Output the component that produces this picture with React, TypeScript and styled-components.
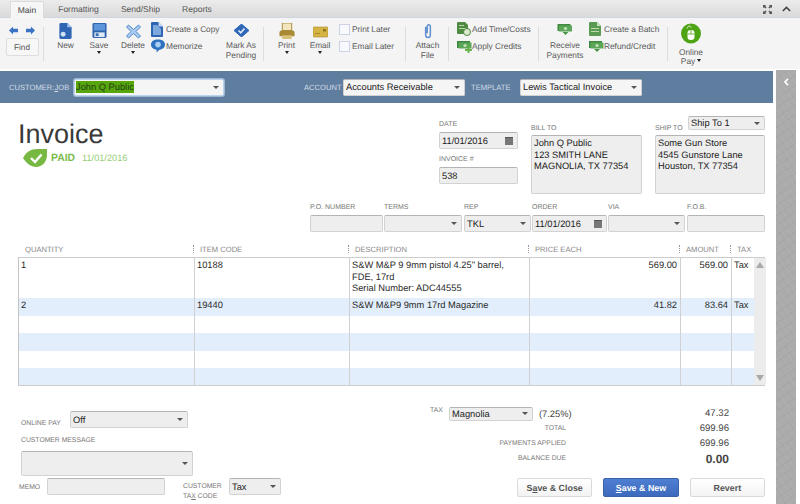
import React from 'react';
import styled, { createGlobalStyle, css } from 'styled-components';

const GlobalStyle = createGlobalStyle`
  html, body { margin: 0; padding: 0; background: #fff; }
  body {
    font-family: 'Liberation Sans', Arial, sans-serif;
    text-rendering: geometricPrecision;
  }
  * { box-sizing: border-box; }
`;

const Page = styled.div`
  width: 800px;
  height: 504px;
  overflow: hidden;
  background: #fff;
  display: flex;
  flex-direction: column;
  color: #2b2b2b;
  font-size: 9.3px;
`;

// TABS
const TabBar = styled.div`
  height: 18px;
  flex: none;
  display: flex;
  align-items: stretch;
  padding: 1px 9px 0 10px;
  background: linear-gradient(#ececec, #dadada);
  border-bottom: 1px solid #cfd6df;
`;
const Tab = styled.div<{ $w: number; $active?: boolean }>`
  display: flex;
  align-items: center;
  justify-content: center;
  width: ${(p) => p.$w}px;
  color: #555;
  font-size: 8.5px;
  ${(p) =>
    p.$active &&
    css`
      background: #f6f6f6;
      color: #444;
      border: 1px solid #dcdcdc;
      border-bottom: none;
      margin-bottom: -1px;
    `}
`;
const TabCorner = styled.div`
  margin-left: auto;
  display: flex;
  align-items: center;
  gap: 10px;
`;

// RIBBON
const Ribbon = styled.div`
  height: 51px;
  flex: none;
  display: flex;
  background: #f4f4f4;
  padding-top: 9px;
`;
const RibbonGroup = styled.div<{ $w: number; $last?: boolean }>`
  width: ${(p) => p.$w}px;
  height: 34px;
  flex: none;
  display: flex;
  border-right: ${(p) => (p.$last ? 'none' : '1px solid #dcdcdc')};
`;
const NavStack = styled.div`
  width: 100%;
  display: flex;
  flex-direction: column;
  align-items: center;
  padding-left: 1px;
  margin-top: -3px;
`;
const NavArrows = styled.div`
  display: flex;
  gap: 8px;
  height: 13px;
  align-items: center;
`;
const FindButton = styled.div`
  margin-top: 1px;
  width: 33px;
  height: 18px;
  flex: none;
  background: #f7f7f7;
  border: 1px solid #dedede;
  border-radius: 2px;
  display: flex;
  align-items: center;
  justify-content: center;
  font-size: 8.2px;
  color: #555;
`;
const Tool = styled.div<{ $w: number }>`
  width: ${(p) => p.$w}px;
  flex: none;
  display: flex;
  flex-direction: column;
  align-items: center;
  margin-top: -4px;
  font-size: 8.3px;
  line-height: 10px;
  color: #5a5a5a;
  text-align: center;
  white-space: nowrap;
`;
const ToolIcon = styled.div`
  height: 16px;
  display: flex;
  align-items: flex-start;
  justify-content: center;
  margin-bottom: 1px;
`;
const Caret = styled.span`
  width: 0;
  height: 0;
  margin-top: 1px;
  border-left: 2.5px solid transparent;
  border-right: 2.5px solid transparent;
  border-top: 3px solid #222;
`;
const MiniStack = styled.div<{ $w: number; $ml?: number }>`
  width: ${(p) => p.$w}px;
  margin-left: ${(p) => p.$ml ?? 0}px;
  flex: none;
  display: flex;
  flex-direction: column;
  gap: 3px;
  margin-top: -5px;
`;
const MiniTool = styled.div`
  height: 14px;
  display: flex;
  align-items: center;
  color: #5a5a5a;
  font-size: 8.3px;
  white-space: nowrap;
`;
const MiniIcon = styled.span`
  width: 15px;
  flex: none;
  display: flex;
  align-items: center;
`;
const PlainCheck = styled.span`
  width: 11px;
  height: 11px;
  margin-right: 2px;
  background: #f8f9fd;
  border: 1px solid #cdd3e6;
  flex: none;
`;
const OnlineTool = styled(Tool)`
  line-height: 8.5px;
`;
const OnlineIcon = styled(ToolIcon)`
  height: 21px;
  margin-bottom: 4px;
`;
const InlineCaret = styled(Caret)`
  display: inline-block;
  margin: 0 0 1px 2px;
  vertical-align: middle;
`;

// WORKSPACE
const Workspace = styled.div`
  flex: 1;
  min-height: 0;
  display: flex;
  padding-top: 1px;
`;
const FormColumn = styled.div`
  width: 773px;
  flex: none;
  display: flex;
  flex-direction: column;
`;
const Sidebar = styled.div`
  width: 20px;
  margin-left: 3px;
  flex: none;
  display: flex;
  justify-content: center;
  padding-top: 8px;
  background-color: #ababab;
  background-image: repeating-linear-gradient(
      55deg,
      transparent 0 5px,
      rgba(255, 255, 255, 0.05) 5px 6px
    ),
    repeating-linear-gradient(-35deg, transparent 0 7px, rgba(0, 0, 0, 0.035) 7px 8px);
`;

// CUSTOMER BAR
const CustomerBar = styled.div`
  height: 32px;
  flex: none;
  margin-top: 1px;
  display: flex;
  align-items: center;
  padding-left: 9px;
  background: #5f7d9f;
`;
const BarLabel = styled.span<{ $w: number; $ml?: number }>`
  width: ${(p) => p.$w}px;
  margin-left: ${(p) => p.$ml ?? 0}px;
  flex: none;
  font-size: 7.6px;
  color: #d3dde8;
  white-space: nowrap;
`;

// FIELDS
const Field = styled.div<{ $w: number; $h?: number; $light?: boolean; $glow?: boolean }>`
  width: ${(p) => p.$w}px;
  height: ${(p) => p.$h ?? 17}px;
  flex: none;
  display: flex;
  align-items: center;
  justify-content: space-between;
  padding: 0 2px;
  font-size: 9.3px;
  color: #222;
  background: ${(p) => (p.$light ? '#f5f5f5' : '#eeeeee')};
  border: 1px solid #d2d2d2;
  border-top-color: #b4b4b4;
  border-radius: 2px;
  ${(p) =>
    p.$glow &&
    css`
      border: 1px solid #bcd3ee;
      box-shadow: 0 0 0 1px rgba(200, 220, 245, 0.6);
    `}
`;
const Arrow = styled.span`
  width: 0;
  height: 0;
  margin-right: 2px;
  border-left: 3px solid transparent;
  border-right: 3px solid transparent;
  border-top: 3px solid #555;
  flex: none;
`;
const Highlight = styled.span`
  display: inline-block;
  margin-left: -1px;
  padding: 1px 0;
  background: #58a60e;
  color: #1f3d10;
`;
const CalendarIcon = styled.span`
  width: 8px;
  height: 8px;
  margin-right: 2px;
  background: #777;
  border-top: 1px solid #555;
  flex: none;
`;

// HEADER
const InvoiceHead = styled.div`
  height: 100px;
  flex: none;
  display: flex;
  padding-left: 18px;
`;
const TitleBlock = styled.div`
  width: 421px;
  flex: none;
  padding-top: 15px;
`;
const Title = styled.h1`
  margin: 0;
  font-size: 27px;
  line-height: 32px;
  font-weight: 400;
  color: #3a3a3a;
`;
const PaidRow = styled.div`
  display: flex;
  align-items: center;
  margin: -1px 0 0 5px;
  height: 18px;
`;
const PaidWord = styled.span`
  margin-left: 4px;
  font-size: 10.4px;
  font-weight: 700;
  color: #7cbc4c;
`;
const PaidDate = styled.span`
  margin-left: 7px;
  font-size: 9.2px;
  color: #96cd72;
`;
const SmallLabel = styled.label`
  display: block;
  font-size: 7px;
  line-height: 9px;
  color: #777;
  white-space: nowrap;
`;
const DateColumn = styled.div`
  width: 79px;
  flex: none;
  padding-top: 17px;
  display: flex;
  flex-direction: column;
`;
const DateFieldLabel = styled(SmallLabel)`
  margin-bottom: 3px;
`;
const InvoiceLabel = styled(DateFieldLabel)`
  margin-top: 6px;
`;
const AddressColumn = styled.div<{ $w: number; $ml: number }>`
  width: ${(p) => p.$w}px;
  margin-left: ${(p) => p.$ml}px;
  flex: none;
  padding-top: 14px;
`;
const AddressHead = styled.div`
  height: 18px;
  display: flex;
  align-items: flex-end;
  justify-content: space-between;
  padding-bottom: 2px;
`;
const ShipSelect = styled(Field)`
  align-self: flex-start;
  margin-top: -1px;
`;
const AddressBox = styled.div`
  height: 59px;
  padding: 2px;
  font-size: 9.3px;
  line-height: 11.5px;
  color: #222;
  background: #eeeeee;
  border: 1px solid #d2d2d2;
  border-top-color: #b4b4b4;
  border-radius: 2px;
  white-space: pre-line;
`;

// P.O. ROW
const OrderRow = styled.div`
  height: 36px;
  flex: none;
  padding-left: 310px;
  display: flex;
`;
const OrderCell = styled.div<{ $w: number; $ml?: number }>`
  width: ${(p) => p.$w}px;
  margin-left: ${(p) => p.$ml ?? 0}px;
  flex: none;
  display: flex;
  flex-direction: column;
  gap: 3px;
`;

// TABLE
const columns = '177px 155px 180px 151px 51px 22px';
const TableHead = styled.div`
  height: 18px;
  flex: none;
  margin-left: 18px;
  width: 747px;
  display: grid;
  grid-template-columns: ${columns};
  align-items: end;
  padding-bottom: 3px;
`;
const HeadCell = styled.div<{ $first?: boolean }>`
  padding-left: ${(p) => (p.$first ? 7 : 5)}px;
  font-size: 7.6px;
  line-height: 9px;
  color: #888;
  position: relative;
  white-space: nowrap;
  ${(p) =>
    !p.$first &&
    css`
      &::before {
        content: '';
        position: absolute;
        left: -2px;
        top: 0;
        height: 8px;
        border-left: 1px dotted #999;
      }
    `}
`;
const TableBody = styled.div`
  flex: none;
  margin-left: 18px;
  width: 747px;
  height: 129px;
  display: flex;
  border: 1px solid #cdcdcd;
  border-right: none;
  border-left-color: #c4c4c4;
`;
const Rows = styled.div`
  width: 735px;
  flex: none;
  display: flex;
  flex-direction: column;
`;
const Row = styled.div<{ $h: number; $blue?: boolean }>`
  height: ${(p) => p.$h}px;
  flex: none;
  display: grid;
  grid-template-columns: 176px 155px 180px 151px 51px 22px;
  background: ${(p) => (p.$blue ? '#e2eefb' : '#fff')};
`;
const Cell = styled.div<{ $right?: boolean }>`
  padding: 2px 3px 0 2px;
  font-size: 9.3px;
  line-height: 11.5px;
  color: #2a2a2a;
  border-right: 1px solid #d0d0d0;
  text-align: ${(p) => (p.$right ? 'right' : 'left')};
  white-space: pre-line;
  &:last-child { border-right: none; }
`;
const ScrollBar = styled.div`
  width: 12px;
  flex: none;
  background: #ececec;
  display: flex;
  flex-direction: column;
  justify-content: space-between;
  align-items: center;
  padding: 4px 0;
`;
const ScrollUp = styled.span`
  border-left: 4px solid transparent;
  border-right: 4px solid transparent;
  border-bottom: 6px solid #a9a9a9;
`;
const ScrollDown = styled.span`
  border-left: 4px solid transparent;
  border-right: 4px solid transparent;
  border-top: 6px solid #a9a9a9;
`;

// FOOTER
const Footer = styled.div`
  flex: 1;
  display: flex;
`;
const FooterLeft = styled.div`
  width: 430px;
  flex: none;
  padding: 25px 0 0 21px;
  display: flex;
  flex-direction: column;
`;
const FooterLabel = styled(SmallLabel)`
  font-size: 6.8px;
`;
const OnlinePayRow = styled.div`
  display: flex;
  align-items: flex-end;
`;
const OnlinePayLabel = styled(FooterLabel)`
  width: 49px;
  flex: none;
`;
const MessageLabel = styled(FooterLabel)`
  margin: 8px 0 6px;
`;
const MemoRow = styled.div`
  display: flex;
  align-items: flex-start;
  margin: 2px 0 0 -3px;
`;
const MemoLabel = styled(FooterLabel)`
  width: 29px;
  padding: 5px 0 0 1px;
  flex: none;
`;
const TaxCodeLabel = styled(FooterLabel)`
  width: 46px;
  margin-left: 18px;
  flex: none;
  line-height: 9.5px;
  padding-top: 4px;
`;
const FooterRight = styled.div`
  width: 335px;
  flex: none;
  padding-top: 20px;
  display: flex;
  flex-direction: column;
`;
const TaxRow = styled.div`
  height: 15px;
  width: 299px;
  display: flex;
  align-items: center;
`;
const TaxLabel = styled(FooterLabel)`
  width: 19px;
  flex: none;
  margin-top: -6px;
`;
const TaxPercent = styled.span`
  margin-left: 6px;
  font-size: 9.3px;
  color: #444;
`;
const Amount = styled.span<{ $big?: boolean }>`
  margin-left: auto;
  font-size: ${(p) => (p.$big ? 12 : 9.6)}px;
  font-weight: ${(p) => (p.$big ? 700 : 400)};
  color: #444;
`;
const TotalRow = styled.div`
  height: 15px;
  width: 299px;
  display: flex;
  align-items: center;
`;
const TotalLabel = styled(FooterLabel)`
  width: 136px;
  text-align: right;
  flex: none;
`;
const ButtonRow = styled.div`
  display: flex;
  gap: 11px;
  margin: 12px 0 0 87px;
`;
const ActionButton = styled.div<{ $primary?: boolean }>`
  width: 76px;
  height: 19px;
  display: flex;
  align-items: center;
  justify-content: center;
  font-size: 8.9px;
  font-weight: 700;
  border-radius: 2px;
  white-space: pre;
  color: ${(p) => (p.$primary ? '#fff' : '#555')};
  background: ${(p) => (p.$primary ? 'linear-gradient(#4f7fd2, #3d6abd)' : 'linear-gradient(#fff, #f3f3f3)')};
  border: 1px solid ${(p) => (p.$primary ? '#3a62a8' : '#dadada')};
`;

// ICONS
const ArrowIcon = ({ flip }: { flip?: boolean }) => (
  <svg width="9" height="9" viewBox="0 0 10 9" style={flip ? { transform: 'scaleX(-1)' } : undefined}>
    <path d="M0 4.5 4.5 0v2.5H10v4H4.5V9z" fill="#3a72c4" />
  </svg>
);
const NewIcon = () => (
  <svg width="13" height="16" viewBox="0 0 13 17">
    <path d="M0 1.5Q0 0 1.5 0H8.5L13 4.5V15.5Q13 17 11.5 17H1.5Q0 17 0 15.5z" fill="#2f66b4" />
    <path d="M8.5 0 13 4.5H8.5z" fill="#a9c8ee" />
    <circle cx="4" cy="12" r="2.6" fill="#cfe0f5" />
  </svg>
);
const SaveIcon = () => (
  <svg width="15" height="15" viewBox="0 0 15 16">
    <rect width="15" height="16" rx="1.5" fill="#2d65ad" />
    <rect x="1.5" y="1" width="12" height="7" fill="#5e95d8" />
    <rect x="2" y="10" width="11" height="5" fill="#dfe9f5" />
    <rect x="3.5" y="11" width="3" height="3" fill="#3b6fb3" />
  </svg>
);
const DeleteIcon = () => (
  <svg width="15" height="15" viewBox="0 0 15 15" style={{ marginTop: 1 }}>
    <path d="M2.5 1 7.5 5.5 12.5 1 14.5 3 10 7.5 14.5 12 12.5 14 7.5 9.5 2.5 14 .5 12 5 7.5.5 3z" fill="#a9cdf2" stroke="#4f86c6" />
  </svg>
);
const CopyIcon = () => (
  <svg width="12" height="15" viewBox="0 0 12 15">
    <path d="M0 1Q0 0 1 0H7.5L12 4.5V14Q12 15 11 15H1Q0 15 0 14z" fill="#2f66b4" />
    <path d="M2 3h4l4 4v6H2z" fill="#7fa9de" />
    <path d="M7.5 0 12 4.5H7.5z" fill="#c8dcf3" />
  </svg>
);
const MemorizeIcon = () => (
  <svg width="14" height="14" viewBox="0 0 15 14">
    <path d="M7.5 0C12 0 15 2 15 5.5S12 11 9 11L6 14V11C3 11 0 9 0 5.5S3 0 7.5 0z" fill="#2f72c0" />
    <circle cx="7.5" cy="5.5" r="3" fill="#a9d0f4" />
  </svg>
);
const PendingIcon = () => (
  <svg width="15" height="13" viewBox="0 0 15 13" style={{ marginTop: 1 }}>
    <path d="M7.5 0 15 6.5 7.5 13 0 6.5z" fill="#2f66b8" strokeLinejoin="round" stroke="#2f66b8" />
    <path d="M4.5 6.5 6.8 8.8 10.5 4.5" fill="none" stroke="#dbe9f8" strokeWidth="1.7" />
  </svg>
);
const PrintIcon = () => (
  <svg width="16" height="16" viewBox="0 0 16 17">
    <rect x="3" width="10" height="8" fill="#f3e6bf" stroke="#a58a3c" />
    <path d="M0 10Q0 8 2 8H14Q16 8 16 10V14H0z" fill="#a88a32" />
    <rect x="3" y="13" width="10" height="4" fill="#d8c27a" />
  </svg>
);
const EmailIcon = () => (
  <svg width="15" height="16" viewBox="0 0 15 16">
    <rect y="4" width="15" height="10" rx="1" fill="#d6b443" stroke="#a78a2c" strokeWidth=".6" />
    <rect x="10" y="6" width="3" height="2.5" fill="#8d7422" />
    <path d="M2 10h5v1H2z" fill="#a78a2c" />
  </svg>
);
const AttachIcon = () => (
  <svg width="10" height="16" viewBox="0 0 10 17">
    <path d="M2.5 4V12.5A2.5 3 0 0 0 7.5 12.5V3.5A1.7 2 0 0 0 4.2 3.5V11" fill="none" stroke="#5f8fd0" strokeWidth="1.6" />
  </svg>
);
const DocGreenIcon = ({ clock }: { clock?: boolean }) => (
  <svg width="14" height="14" viewBox="0 0 14 14">
    <path d="M0 1Q0 0 1 0H8L11 3V12H1Q0 12 0 11z" fill="#4f8a42" />
    <path d="M2 3h5v1H2zM2 6h7v1H2z" fill="#bcd8ad" />
    {clock && <circle cx="10" cy="10" r="3.5" fill="#dcebd0" stroke="#4f8a42" />}
  </svg>
);
const MoneyIcon = ({ plus, w = 15 }: { plus?: boolean; w?: number }) => (
  <svg width={w} height="13" viewBox="0 0 15 13">
    <rect y="1" width="13" height="7" fill="#3f8a3e" />
    <rect x="1.5" y="2.5" width="13" height="6" fill="#5ba658" />
    <circle cx="8" cy="5.5" r="1.6" fill="#c5e2b8" />
    {plus ? <path d="M8 9h2.5V6.5h2V9H15v2h-2.5v2h-2v-2H8z" fill="#67b24b" /> : <path d="M5 9h6l-3 3z" fill="#4a9445" />}
  </svg>
);
const BatchIcon = () => (
  <svg width="12" height="14" viewBox="0 0 12 14">
    <path d="M0 1Q0 0 1 0H8L12 4V13Q12 14 11 14H1Q0 14 0 13z" fill="#5a9a52" />
    <path d="M8 0 12 4H8z" fill="#c8e2bb" />
    <path d="M2 6h8v1H2zM2 9h8v1H2z" fill="#bcd8ad" />
  </svg>
);
const OnlinePayIcon = () => (
  <svg width="20" height="21" viewBox="0 0 20 21">
    <circle cx="10" cy="10.5" r="10" fill="#4ea415" />
    <rect x="6.5" y="7" width="7" height="10" rx="3.2" fill="#fff" />
    <path d="M10 7V11M6.5 11H13.5" stroke="#4ea415" strokeWidth=".8" />
    <path d="M6 5.5C7 2.5 9.5 2.5 10 4.5" fill="none" stroke="#fff" strokeWidth=".9" />
  </svg>
);
const PaidIcon = () => (
  <svg width="24" height="18" viewBox="0 0 24 18">
    <path d="M0 9C3 3 8 0 14 0H24V6C24 13 19 18 13 18 8 18 3 14 0 9z" fill="#77b843" />
    <path d="M8 9 12 13 18.5 5.5" fill="none" stroke="#fff" strokeWidth="2.4" />
  </svg>
);
const ExpandIcon = () => (
  <svg width="9" height="9" viewBox="0 0 9 9" fill="#555">
    <path d="M0 0h3L2.2 1 3.6 2.6 2.6 3.6 1 2.2 0 3zM9 0v3L8 2.2 6.4 3.6 5.4 2.6 6.8 1 6 0zM0 9V6L1 6.8 2.6 5.4 3.6 6.4 2.2 8 3 9zM9 9H6L6.8 8 5.4 6.4 6.4 5.4 8 6.8 9 6z" />
  </svg>
);
const ChevronUp = () => (
  <svg width="9" height="6" viewBox="0 0 9 6">
    <path d="M.8 5 4.5 1.4 8.2 5" fill="none" stroke="#444" strokeWidth="1.6" />
  </svg>
);
const ChevronLeft = () => (
  <svg width="5" height="8" viewBox="0 0 5 8">
    <path d="M4 .8 1 4 4 7.2" fill="none" stroke="#fff" strokeWidth="1.7" />
  </svg>
);

// DATA
const lineRows = [
  { h: 40, cells: ['1', '10188', 'S&W M&P 9 9mm pistol 4.25" barrel,\nFDE, 17rd\nSerial Number: ADC44555', '569.00', '569.00', 'Tax'] },
  { h: 18, blue: true, cells: ['2', '19440', 'S&W M&P9 9mm 17rd Magazine', '41.82', '83.64', 'Tax'] },
  { h: 17, cells: [] },
  { h: 18, blue: true, cells: [] },
  { h: 17, cells: [] },
  { h: 17, blue: true, cells: [] },
];
const emptyRow = ['', '', '', '', '', ''];
const heads = ['QUANTITY', 'ITEM CODE', 'DESCRIPTION', 'PRICE EACH', 'AMOUNT', 'TAX'];

const Select = ({ w, h, children, light, glow }: any) => (
  <Field $w={w} $h={h} $light={light} $glow={glow}>
    <span>{children}</span>
    <Arrow />
  </Field>
);

const App = () => {
  return (
    <Page>
      <GlobalStyle />
      <TabBar>
        <Tab $w={34} $active>Main</Tab>
        <Tab $w={69}>Formatting</Tab>
        <Tab $w={55}>Send/Ship</Tab>
        <Tab $w={58}>Reports</Tab>
        <TabCorner>
          <ExpandIcon />
          <ChevronUp />
        </TabCorner>
      </TabBar>

      <Ribbon>
        <RibbonGroup $w={44}>
          <NavStack>
            <NavArrows>
              <ArrowIcon />
              <ArrowIcon flip />
            </NavArrows>
            <FindButton>Find</FindButton>
          </NavStack>
        </RibbonGroup>
        <RibbonGroup $w={220}>
          <Tool $w={43}>
            <ToolIcon><NewIcon /></ToolIcon>
            New
          </Tool>
          <Tool $w={24}>
            <ToolIcon><SaveIcon /></ToolIcon>
            Save
            <Caret />
          </Tool>
          <Tool $w={44}>
            <ToolIcon><DeleteIcon /></ToolIcon>
            Delete
            <Caret />
          </Tool>
          <MiniStack $w={73} $ml={-4}>
            <MiniTool><MiniIcon><CopyIcon /></MiniIcon>Create a Copy</MiniTool>
            <MiniTool><MiniIcon><MemorizeIcon /></MiniIcon>Memorize</MiniTool>
          </MiniStack>
          <Tool $w={34}>
            <ToolIcon><PendingIcon /></ToolIcon>
            Mark As
            <br />
            Pending
          </Tool>
        </RibbonGroup>
        <RibbonGroup $w={142}>
          <Tool $w={45}>
            <ToolIcon><PrintIcon /></ToolIcon>
            Print
            <Caret />
          </Tool>
          <Tool $w={22}>
            <ToolIcon><EmailIcon /></ToolIcon>
            Email
            <Caret />
          </Tool>
          <MiniStack $w={60} $ml={8}>
            <MiniTool><PlainCheck />Print Later</MiniTool>
            <MiniTool><PlainCheck />Email Later</MiniTool>
          </MiniStack>
        </RibbonGroup>
        <RibbonGroup $w={43}>
          <Tool $w={43}>
            <ToolIcon><AttachIcon /></ToolIcon>
            Attach
            <br />
            File
          </Tool>
        </RibbonGroup>
        <RibbonGroup $w={90}>
          <MiniStack $w={80} $ml={8}>
            <MiniTool><MiniIcon><DocGreenIcon clock /></MiniIcon>Add Time/Costs</MiniTool>
            <MiniTool><MiniIcon><MoneyIcon plus /></MiniIcon>Apply Credits</MiniTool>
          </MiniStack>
        </RibbonGroup>
        <RibbonGroup $w={129}>
          <Tool $w={52}>
            <ToolIcon><MoneyIcon w={16} /></ToolIcon>
            Receive
            <br />
            Payments
          </Tool>
          <MiniStack $w={76} $ml={-2}>
            <MiniTool><MiniIcon><BatchIcon /></MiniIcon>Create a Batch</MiniTool>
            <MiniTool><MiniIcon><MoneyIcon /></MiniIcon>Refund/Credit</MiniTool>
          </MiniStack>
        </RibbonGroup>
        <RibbonGroup $w={46} $last>
          <OnlineTool $w={46}>
            <OnlineIcon><OnlinePayIcon /></OnlineIcon>
            Online
            <br />
            <span>Pay<InlineCaret /></span>
          </OnlineTool>
        </RibbonGroup>
      </Ribbon>

      <Workspace>
        <FormColumn>
          <CustomerBar>
            <BarLabel $w={65}>CUSTOMER:<u>J</u>OB</BarLabel>
            <Select w={150} h={17} light glow><Highlight>John Q Public</Highlight></Select>
            <BarLabel $w={39} $ml={80}>ACCOUNT</BarLabel>
            <Select w={122} h={17} light>Accounts Receivable</Select>
            <BarLabel $w={49} $ml={6}>TEMPLATE</BarLabel>
            <Select w={122} h={17} light>Lewis Tactical Invoice</Select>
          </CustomerBar>

          <InvoiceHead>
            <TitleBlock>
              <Title>Invoice</Title>
              <PaidRow>
                <PaidIcon />
                <PaidWord>PAID</PaidWord>
                <PaidDate>11/01/2016</PaidDate>
              </PaidRow>
            </TitleBlock>
            <DateColumn>
              <DateFieldLabel>DATE</DateFieldLabel>
              <Field $w={79}>11/01/2016<CalendarIcon /></Field>
              <InvoiceLabel>INVOICE #</InvoiceLabel>
              <Field $w={79}>538</Field>
            </DateColumn>
            <AddressColumn $w={111} $ml={13}>
              <AddressHead><SmallLabel>BILL TO</SmallLabel></AddressHead>
              <AddressBox>{'John Q Public\n123 SMITH LANE\nMAGNOLIA, TX 77354'}</AddressBox>
            </AddressColumn>
            <AddressColumn $w={110} $ml={13}>
              <AddressHead>
                <SmallLabel>SHIP TO</SmallLabel>
                <ShipSelect $w={77} $h={14}>Ship To 1<Arrow /></ShipSelect>
              </AddressHead>
              <AddressBox>{'Some Gun Store\n4545 Gunstore Lane\nHouston, TX 77354'}</AddressBox>
            </AddressColumn>
          </InvoiceHead>

          <OrderRow>
            <OrderCell $w={73}>
              <SmallLabel>P.O. NUMBER</SmallLabel>
              <Field $w={73} />
            </OrderCell>
            <OrderCell $w={78} $ml={1}>
              <SmallLabel>TERMS</SmallLabel>
              <Select w={78} />
            </OrderCell>
            <OrderCell $w={67} $ml={2}>
              <SmallLabel>REP</SmallLabel>
              <Select w={67}>TKL</Select>
            </OrderCell>
            <OrderCell $w={75} $ml={1}>
              <SmallLabel>ORDER</SmallLabel>
              <Field $w={75}>11/01/2016<CalendarIcon /></Field>
            </OrderCell>
            <OrderCell $w={77} $ml={1}>
              <SmallLabel>VIA</SmallLabel>
              <Select w={77} />
            </OrderCell>
            <OrderCell $w={78} $ml={2}>
              <SmallLabel>F.O.B.</SmallLabel>
              <Field $w={78} />
            </OrderCell>
          </OrderRow>

          <TableHead>
            {heads.map((h, i) => (
              <HeadCell key={h} $first={i === 0}>{h}</HeadCell>
            ))}
          </TableHead>
          <TableBody>
            <Rows>
              {lineRows.map((row, i) => (
                <Row key={i} $h={row.h} $blue={row.blue}>
                  {(row.cells.length ? row.cells : emptyRow).map((c, j) => (
                    <Cell key={j} $right={j === 3 || j === 4}>{c}</Cell>
                  ))}
                </Row>
              ))}
            </Rows>
            <ScrollBar>
              <ScrollUp />
              <ScrollDown />
            </ScrollBar>
          </TableBody>

          <Footer>
            <FooterLeft>
              <OnlinePayRow>
                <OnlinePayLabel>ONLINE PAY</OnlinePayLabel>
                <Select w={118}>Off</Select>
              </OnlinePayRow>
              <MessageLabel>CUSTOMER MESSAGE</MessageLabel>
              <Select w={172} h={25} />
              <MemoRow>
                <MemoLabel>MEMO</MemoLabel>
                <Field $w={118} />
                <TaxCodeLabel>CUSTOMER<br />TA<u>X</u> CODE</TaxCodeLabel>
                <Select w={52}>Tax</Select>
              </MemoRow>
            </FooterLeft>
            <FooterRight>
              <TaxRow>
                <TaxLabel>TAX</TaxLabel>
                <Select w={84} h={14}>Magnolia</Select>
                <TaxPercent>(7.25%)</TaxPercent>
                <Amount>47.32</Amount>
              </TaxRow>
              <TotalRow>
                <TotalLabel>TOTAL</TotalLabel>
                <Amount>699.96</Amount>
              </TotalRow>
              <TotalRow>
                <TotalLabel>PAYMENTS APPLIED</TotalLabel>
                <Amount>699.96</Amount>
              </TotalRow>
              <TotalRow>
                <TotalLabel>BALANCE DUE</TotalLabel>
                <Amount $big>0.00</Amount>
              </TotalRow>
              <ButtonRow>
                <ActionButton>S<u>a</u>ve &amp; Close</ActionButton>
                <ActionButton $primary><u>S</u>ave &amp; New</ActionButton>
                <ActionButton>Revert</ActionButton>
              </ButtonRow>
            </FooterRight>
          </Footer>
        </FormColumn>
        <Sidebar>
          <ChevronLeft />
        </Sidebar>
      </Workspace>
    </Page>
  );
};

export default App;
